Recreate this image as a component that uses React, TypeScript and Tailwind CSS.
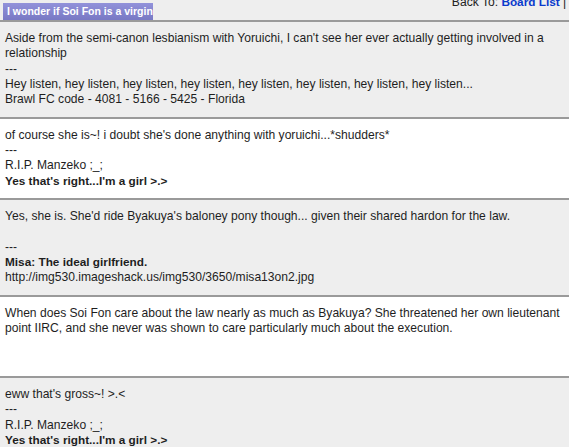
import type { FC, ReactNode } from "react";

type Post = {
	id: number;
	shade: "gray" | "white";
	lines: ReactNode[];
};

const Sig: FC<{ children: ReactNode }> = ({ children }) => (
	<b className="text-[11.8px]">{children}</b>
);

const sigGirl = "Yes that's right...I'm a girl >.>";

const posts: Post[] = [
	{
		id: 1,
		shade: "gray",
		lines: [
			"Aside from the semi-canon lesbianism with Yoruichi, I can't see her ever actually getting involved in a",
			"relationship",
			"---",
			"Hey listen, hey listen, hey listen, hey listen, hey listen, hey listen, hey listen, hey listen...",
			"Brawl FC code - 4081 - 5166 - 5425 - Florida",
		],
	},
	{
		id: 2,
		shade: "white",
		lines: [
			"of course she is~! i doubt she's done anything with yoruichi...*shudders*",
			"---",
			"R.I.P. Manzeko ;_;",
			<Sig key="sig">{sigGirl}</Sig>,
		],
	},
	{
		id: 3,
		shade: "gray",
		lines: [
			"Yes, she is. She'd ride Byakuya's baloney pony though... given their shared hardon for the law.",
			"",
			"---",
			<Sig key="sig">Misa: The ideal girlfriend.</Sig>,
			"http://img530.imageshack.us/img530/3650/misa13on2.jpg",
		],
	},
	{
		id: 4,
		shade: "white",
		lines: [
			"When does Soi Fon care about the law nearly as much as Byakuya? She threatened her own lieutenant",
			"point IIRC, and she never was shown to care particularly much about the execution.",
			"",
			"",
		],
	},
	{
		id: 5,
		shade: "gray",
		lines: [
			"eww that's gross~! >.<",
			"---",
			"R.I.P. Manzeko ;_;",
			<Sig key="sig">{sigGirl}</Sig>,
		],
	},
];

const PostRow: FC<{ post: Post }> = ({ post }) => (
	<div
		className={`border-t-2 border-[#9a9a9a] px-[5px] py-[9px] ${
			post.shade === "gray" ? "bg-[#eeeeee]" : "bg-white"
		}`}
	>
		{post.lines.map((line, i) => (
			<div key={i} className="h-[15.33px] whitespace-nowrap">
				{line}
			</div>
		))}
	</div>
);

export default function App() {
	return (
		<div
			className="h-[447px] w-[569px] overflow-hidden bg-[#eeeeee] text-[12.1px] leading-[15.33px] text-[#1e1e1e]"
			style={{ fontFamily: '"Liberation Sans", Arial, sans-serif' }}
		>
			<div className="flex items-start whitespace-nowrap">
				<div className="ml-[3px] mt-[3px] h-[17px] w-[150px] bg-gradient-to-b from-[#9292da] to-[#7878c4] pl-[4px] text-[10.5px] font-bold leading-[17px] text-white">
					I wonder if Soi Fon is a virgin
				</div>
				<div className="-mt-[5px] ml-[299px] text-[#222]">
					Back To: <b className="text-[11.8px] text-[#0a3acc]">Board List</b> |{" "}
					<b className="text-[11.8px] text-[#0a3acc]">Topic List</b>
				</div>
			</div>
			{posts.map((post) => (
				<PostRow key={post.id} post={post} />
			))}
		</div>
	);
}
